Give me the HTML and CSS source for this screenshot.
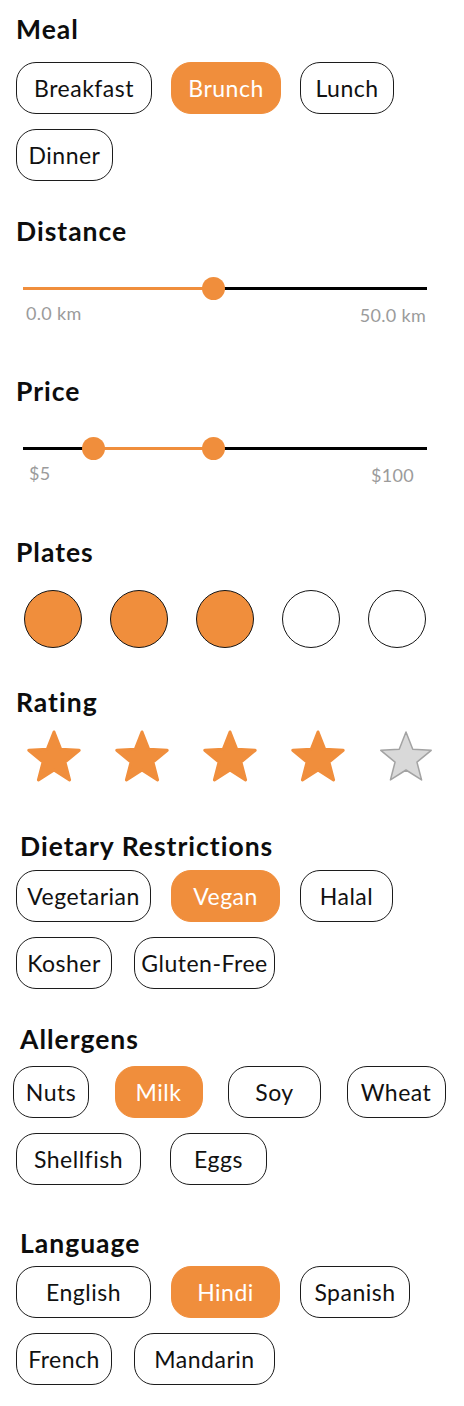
FILE: index.html
```html
<!DOCTYPE html>
<html lang="en">
<head>
<meta charset="utf-8">
<title>Filters</title>
<link rel="stylesheet" href="styles.css">
</head>
<body>
<main class="page">

  <section class="section">
    <h2 class="title">Meal</h2>
    <div class="chips chips-meal">
      <div class="row g19">
        <span class="chip w136">Breakfast</span>
        <span class="chip chip-on w110">Brunch</span>
        <span class="chip w94">Lunch</span>
      </div>
      <div class="row g19">
        <span class="chip w97">Dinner</span>
      </div>
    </div>
  </section>

  <section class="section sec-distance">
    <h2 class="title">Distance</h2>
    <div class="slider">
      <div class="track">
        <span class="seg seg-on" style="width:190px"></span>
        <span class="seg seg-off"></span>
      </div>
      <span class="thumb" style="left:178.5px"></span>
    </div>
    <div class="slider-labels labels-distance">
      <span>0.0 km</span>
      <span class="lbl-right">50.0 km</span>
    </div>
  </section>

  <section class="section sec-price">
    <h2 class="title">Price</h2>
    <div class="slider">
      <div class="track">
        <span class="seg seg-off" style="width:70px"></span>
        <span class="seg seg-on" style="width:120px"></span>
        <span class="seg seg-off"></span>
      </div>
      <span class="thumb" style="left:58.5px"></span>
      <span class="thumb" style="left:178.5px"></span>
    </div>
    <div class="slider-labels labels-price">
      <span>$5</span>
      <span class="lbl-right">$100</span>
    </div>
  </section>

  <section class="section sec-plates">
    <h2 class="title">Plates</h2>
    <div class="plates">
      <span class="plate plate-on"></span>
      <span class="plate plate-on"></span>
      <span class="plate plate-on"></span>
      <span class="plate"></span>
      <span class="plate"></span>
    </div>
  </section>

  <section class="section sec-rating">
    <h2 class="title">Rating</h2>
    <div class="stars">
      <svg class="star star-on" viewBox="0 0 56 52" width="56" height="52"><polygon points="28,2 34.76,19.2 53.2,20.31 38.94,32.05 43.58,49.94 28,40 12.42,49.94 17.06,32.05 2.8,20.31 21.24,19.2"/></svg>
      <svg class="star star-on" viewBox="0 0 56 52" width="56" height="52"><polygon points="28,2 34.76,19.2 53.2,20.31 38.94,32.05 43.58,49.94 28,40 12.42,49.94 17.06,32.05 2.8,20.31 21.24,19.2"/></svg>
      <svg class="star star-on" viewBox="0 0 56 52" width="56" height="52"><polygon points="28,2 34.76,19.2 53.2,20.31 38.94,32.05 43.58,49.94 28,40 12.42,49.94 17.06,32.05 2.8,20.31 21.24,19.2"/></svg>
      <svg class="star star-on" viewBox="0 0 56 52" width="56" height="52"><polygon points="28,2 34.76,19.2 53.2,20.31 38.94,32.05 43.58,49.94 28,40 12.42,49.94 17.06,32.05 2.8,20.31 21.24,19.2"/></svg>
      <svg class="star star-off" viewBox="0 0 56 52" width="56" height="52"><polygon points="28,2 34.76,19.2 53.2,20.31 38.94,32.05 43.58,49.94 28,40 12.42,49.94 17.06,32.05 2.8,20.31 21.24,19.2"/></svg>
    </div>
  </section>

  <section class="section sec-diet">
    <h2 class="title title-inset">Dietary Restrictions</h2>
    <div class="chips chips-tight">
      <div class="row g20">
        <span class="chip w135">Vegetarian</span>
        <span class="chip chip-on w109">Vegan</span>
        <span class="chip w93">Halal</span>
      </div>
      <div class="row g22">
        <span class="chip w96">Kosher</span>
        <span class="chip w141">Gluten-Free</span>
      </div>
    </div>
  </section>

  <section class="section sec-allergens">
    <h2 class="title title-inset">Allergens</h2>
    <div class="chips chips-allergens">
      <div class="row row-out g25">
        <span class="chip w76">Nuts</span>
        <span class="chip chip-on w88">Milk</span>
        <span class="chip w93">Soy</span>
        <span class="chip w99">Wheat</span>
      </div>
      <div class="row g29">
        <span class="chip w125">Shellfish</span>
        <span class="chip w97">Eggs</span>
      </div>
    </div>
  </section>

  <section class="section sec-language">
    <h2 class="title title-inset">Language</h2>
    <div class="chips chips-language">
      <div class="row g20">
        <span class="chip w135">English</span>
        <span class="chip chip-on w109">Hindi</span>
        <span class="chip w110">Spanish</span>
      </div>
      <div class="row g22">
        <span class="chip w96">French</span>
        <span class="chip w141">Mandarin</span>
      </div>
    </div>
  </section>

</main>
</body>
</html>
```

FILE: styles.css
```css
* { box-sizing: border-box; }

html, body {
  margin: 0;
  padding: 0;
  background: #ffffff;
}

body {
  font-family: Lato, "Open Sans", "Liberation Sans", sans-serif;
  color: #111111;
}

.page {
  width: 464px;
  padding: 13px 0 0 16px;
}

.section { margin: 0; }

.title {
  margin: 0;
  font-size: 26.5px;
  line-height: 32px;
  font-weight: 700;
  letter-spacing: 1px;
  color: #0d0d0d;
}

.title-inset { padding-left: 4px; }

/* spacing between sections */
.sec-distance  { margin-top: 34px; }
.sec-price     { margin-top: 51px; }
.sec-plates    { margin-top: 52px; }
.sec-rating    { margin-top: 38px; }
.sec-diet      { margin-top: 48px; }
.sec-allergens { margin-top: 34px; }
.sec-language  { margin-top: 42px; }

/* chips */
.chips {
  display: flex;
  flex-direction: column;
  gap: 15px;
  margin-top: 17px;
}
.chips-tight     { margin-top: 8px; }
.chips-allergens { margin-top: 11px; }
.chips-language  { margin-top: 7px; }

.row { display: flex; }
.row-out { margin-left: -3px; }
.g19 { gap: 19px; }
.g20 { gap: 20px; }
.g22 { gap: 22px; }
.g25 { gap: 25.5px; }
.g29 { gap: 29px; }

.chip {
  display: flex;
  align-items: center;
  justify-content: center;
  height: 52px;
  border: 1px solid #1c1c1c;
  border-radius: 20px;
  font-size: 23px;
  line-height: 50px;
  letter-spacing: 0.5px;
  color: #111111;
  white-space: nowrap;
}
.chip-on {
  background: #f08e3c;
  border-color: #f08e3c;
  color: #ffffff;
}

.w76 { width: 76px; }
.w88 { width: 88px; }
.w93 { width: 93px; }
.w94 { width: 94px; }
.w96 { width: 96px; }
.w97 { width: 97px; }
.w99 { width: 99px; }
.w109 { width: 109px; }
.w110 { width: 110px; }
.w125 { width: 125px; }
.w135 { width: 135px; }
.w136 { width: 136px; }
.w141 { width: 141px; }

/* sliders */
.slider {
  position: relative;
  width: 404px;
  height: 24px;
  margin: 29px 0 0 7px;
  display: flex;
  align-items: center;
}
.track {
  display: flex;
  width: 100%;
  height: 3px;
}
.seg { display: block; height: 3px; }
.seg-on { background: #f08e3c; }
.seg-off { background: #000000; flex: 1 1 auto; }
.track .seg[style] { flex: 0 0 auto; }

.thumb {
  position: absolute;
  top: 0.5px;
  width: 23px;
  height: 23px;
  border-radius: 50%;
  background: #f08e3c;
}

.slider-labels {
  display: flex;
  justify-content: space-between;
  width: 404px;
  margin: 2px 0 0 7px;
  font-size: 18px;
  line-height: 22px;
  letter-spacing: 0.3px;
  color: #9b9b9b;
}
.lbl-right { position: relative; top: 2px; }
.labels-distance { padding: 0 1px 0 3px; }
.labels-price { padding: 0 13px 0 6px; }

/* plates */
.plates {
  display: flex;
  gap: 28px;
  margin: 22px 0 0 8px;
}
.plate {
  display: block;
  width: 58px;
  height: 58px;
  border-radius: 50%;
  border: 1px solid #151515;
  background: #ffffff;
}
.plate-on { background: #f08e3c; }

/* stars */
.stars {
  display: flex;
  gap: 32px;
  margin: 12px 0 0 10px;
}
.star { display: block; }
.star-on polygon {
  fill: #f08e3c;
  stroke: #f08e3c;
  stroke-width: 3;
  stroke-linejoin: round;
}
.star-off polygon {
  fill: #d9d9d9;
  stroke: #a3a3a3;
  stroke-width: 1.5;
  stroke-linejoin: round;
}
```
